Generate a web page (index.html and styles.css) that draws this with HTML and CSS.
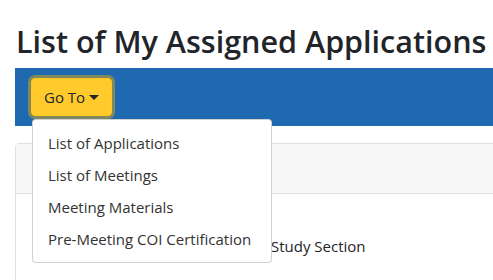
FILE: index.html
```html
<!DOCTYPE html>
<html lang="en">
<head>
    <meta charset="UTF-8">
    <title>List of My Assigned Applications</title>
    <link rel="stylesheet" href="styles.css">
</head>
<body>
    <div class="container">
        <h1>List of My Assigned Applications</h1>

        <!-- навигация -->
        <nav class="navbar">
            <div class="dropdown">
                <button class="btn-goto">Go To</button>
                <div class="dropdown-menu">
                    <a class="dropdown-item" href="#">List of Applications</a>
                    <a class="dropdown-item" href="#">List of Meetings</a>
                    <a class="dropdown-item" href="#">Meeting Materials</a>
                    <a class="dropdown-item" href="#">Pre-Meeting COI Certification</a>
                </div>
            </div>
        </nav>

        <div class="card">
            <div class="card-header"></div>
            <div class="card-body">
                <span class="meeting-label">Review Group:</span>
                <span class="meeting">Study Section</span>
            </div>
        </div>
    </div>
</body>
</html>
```

FILE: styles.css
```css
html, body {
    overflow: hidden;
}
body {
    margin: 0;
    font-family: "Open Sans", sans-serif;
    color: #212529;
    background-color: white;
}
.container {
    width: 640px;
    padding: 0 15px;
}
h1 {
    font-size: 30.5px;
    font-weight: 600;
    line-height: 1.2;
    margin: 23px 0 8px 1px;
    white-space: nowrap;
}
.navbar {
    background-color: #1f69b0;
    padding: 10px 16px;
}
.dropdown {
    position: relative;
    display: inline-block;
}
.btn-goto {
    font-family: inherit;
    font-size: 15px;
    line-height: 24px;
    color: #212529;
    background-color: #ffca2c;
    border: 1px solid #ffc720;
    border-radius: 4px;
    padding: 6px 12px;
    box-shadow: 0 0 0 3px rgba(222, 170, 12, 0.5);
}
.btn-goto::after {
    content: "";
    display: inline-block;
    margin-left: 4px;
    vertical-align: 3px;
    border-top: 5px solid;
    border-right: 5px solid transparent;
    border-left: 5px solid transparent;
}
.dropdown-menu {
    position: absolute;
    top: 41px;
    left: 1px;
    z-index: 10;
    width: 238px;
    padding: 7px 0;
    background-color: white;
    border: 1px solid rgba(0, 0, 0, 0.18);
    border-radius: 4px;
}
.dropdown-item {
    display: block;
    padding: 4px 15px;
    font-size: 15px;
    line-height: 24px;
    color: #333;
    text-decoration: none;
    white-space: nowrap;
}
.card {
    margin-top: 17px;
    border: 1px solid #dfe1e3;
    border-radius: 4px;
}
.card-header {
    height: 49px;
    background-color: #f7f7f8;
    border-bottom: 1px solid #dfe1e3;
}
.card-body {
    display: flex;
    padding: 40px 20px;
    font-size: 15px;
    line-height: 24px;
}
.meeting-label {
    width: 235px;
}
```
